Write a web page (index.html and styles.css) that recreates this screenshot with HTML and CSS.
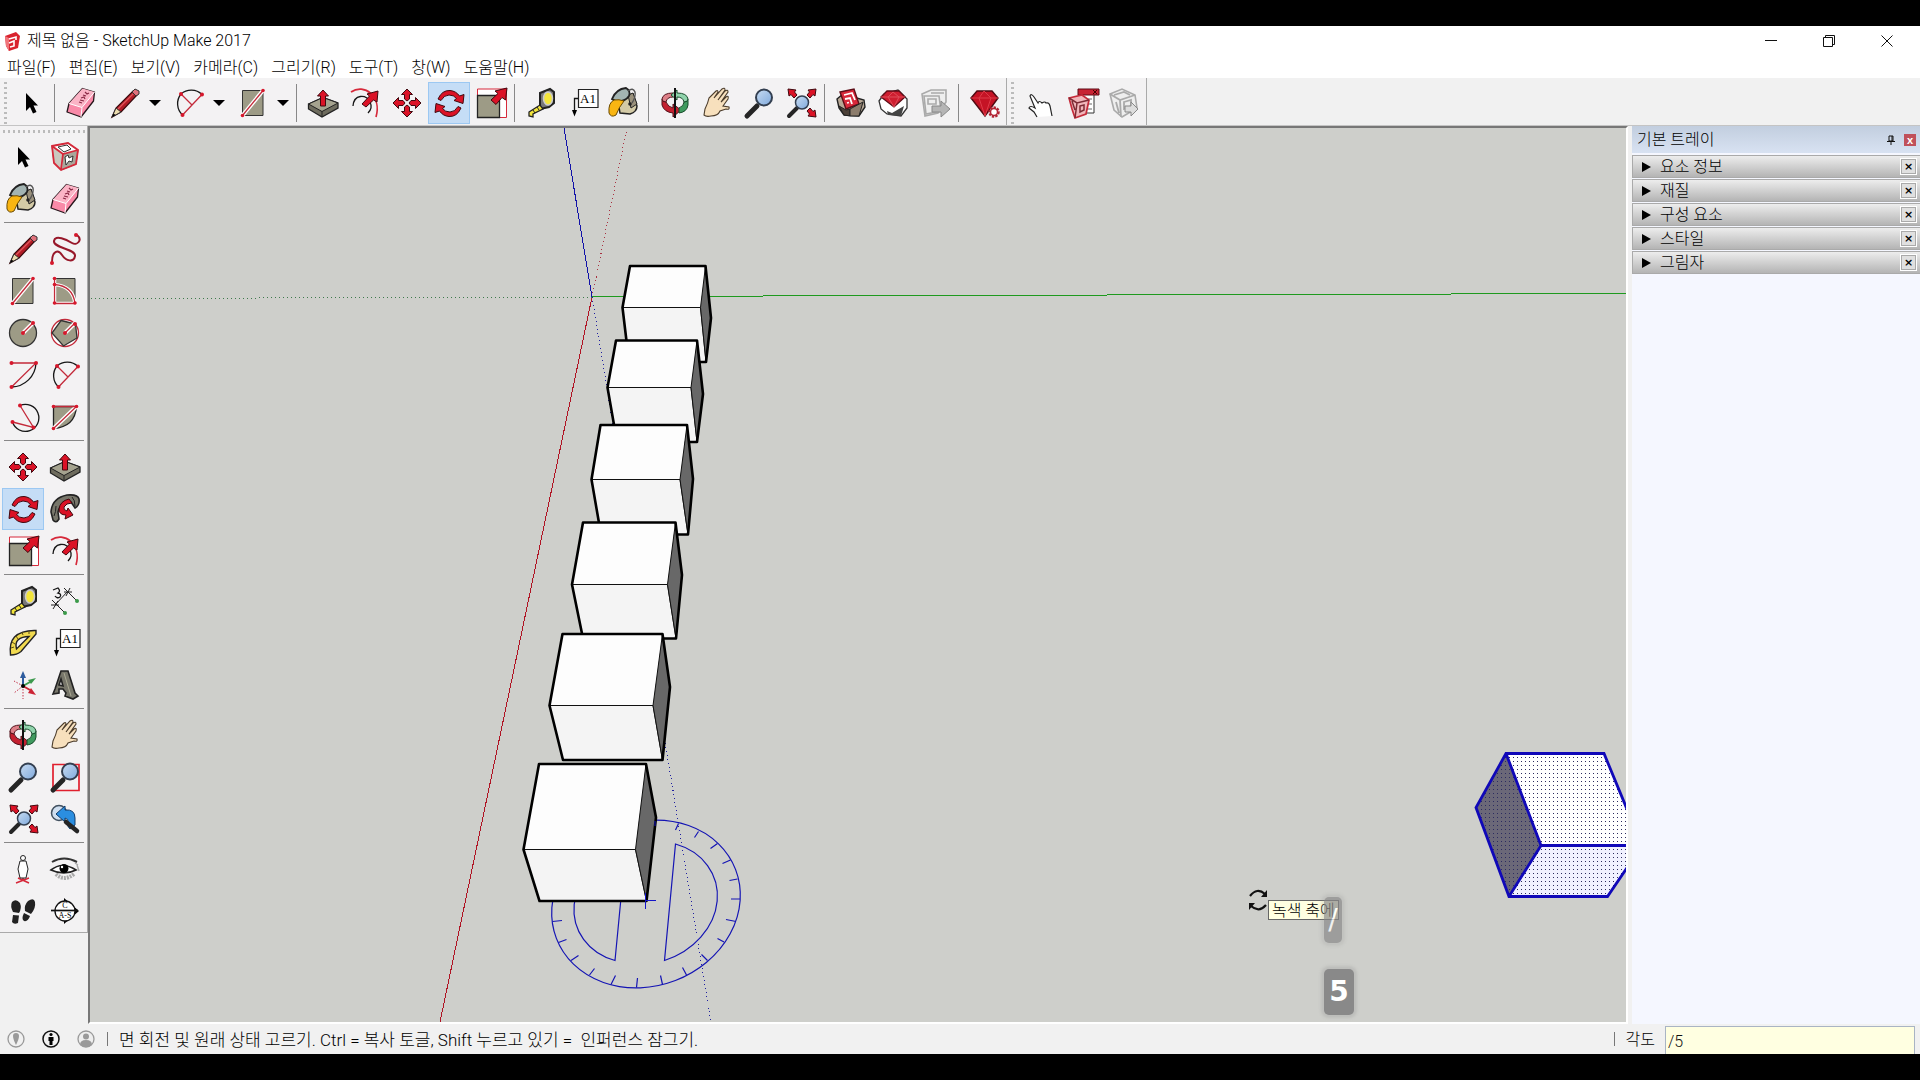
FILE: index.html
```html
<!DOCTYPE html>
<html lang="ko">
<head>
<meta charset="utf-8">
<title>제목 없음 - SketchUp Make 2017</title>
<link rel="stylesheet" href="styles.css">
</head>
<body>
<svg class="sprite" width="0" height="0" aria-hidden="true">
  <defs>
    <linearGradient id="lens" x1="0" y1="0" x2="1" y2="1"><stop offset="0" stop-color="#c8dcf2"/><stop offset="1" stop-color="#7fa9dc"/></linearGradient>
    <pattern id="dots" width="4" height="4" patternUnits="userSpaceOnUse"><rect x="1" y="1" width="1" height="1" fill="#2c2c60"/></pattern>
  </defs>
  <symbol id="i-select" viewBox="0 0 42 42"><path d="M16 11V29L20 25L23 31.500L26.500 30L23.500 23.500H28Z"/></symbol>
  <symbol id="i-component" viewBox="0 0 42 42">
    <path d="M8 10L24 7L34 14L32 28L17 34L10 27Z" fill="#fff" stroke="#555"/>
    <path d="M19 18L34 14L32 28L18 34Z" fill="#a9a79b"/>
    <path d="M8 10L19 18L17 34L10 27Z" fill="#c9c8bf"/>
    <path d="M14 11L23 9L27 13L20 16ZM21 21l3-2 1 3 4-2-1 6-3-1-3 4z" fill="#fff" stroke="#333"/>
    <path d="M8 10L24 7L34 14L32 28L17 34L10 27ZM8 10L19 18L34 14M19 18L17 34" fill="none" stroke="#d6293a" stroke-width="1.800"/>
  </symbol>
  <symbol id="i-paint" viewBox="0 0 42 42">
    <path d="M14 19L29 12L33 24Q33 30 26 32L16 31Z" fill="#d3caa6" stroke="#222" stroke-width="1.500"/>
    <path d="M24 13L29 11L33 22L27 26Z" fill="#9a917c" stroke="#222"/>
    <path d="M8 17Q12 7 22 6Q27 9 25 14Q21 20 12 19Z" fill="#a3b4b2" stroke="#222" stroke-width="1.800"/>
    <path d="M24 9Q29 5 31 10Q32 15 28 21" fill="none" stroke="#555" stroke-width="1.400"/>
    <circle cx="26" cy="22" r="1.800" fill="#222"/>
    <path d="M5 31Q4 21 10 18Q15 17 20 19Q15 25 12 33Q7 36 5 31Z" fill="#f9b512" stroke="#6b4a00"/>
  </symbol>
  <symbol id="i-eraser" viewBox="0 0 42 42">
    <path d="M22.500 6.500L34.500 10L33.500 19L21 35L7 30L9 21.500Z" fill="#f98aa8" stroke="#26161b" stroke-width="1.300" stroke-linejoin="round"/>
    <path d="M9 21.500L22.500 6.500L34.500 10L22 25.500Z" fill="#fbb4c6"/><path d="M9 21.500L22 25.500L21 35M22 25.500L34.500 10" fill="none" stroke="#fff"/>
    <path d="M19 20l3 1M20 18l4 1M21 16l3-1 1 2M23 13l3 1M25 10l2 2 2-1" fill="none" stroke="#8a2844" stroke-width="1.200"/>
  </symbol>
  <symbol id="i-pencil" viewBox="0 0 42 42">
    <path d="M8 35L12 26L29 9L33 13L17 30Z" fill="#b11c26" stroke="#3a0a0d" stroke-width="1.200"/>
    <path d="M14 27L30 11" stroke="#e0555a" stroke-width="1.300"/>
    <path d="M8 35L12 26L17 30Z" fill="#ecdcae" stroke="#333"/><path d="M8 35l1.500-3.500 2 1.500z"/>
    <path d="M28 10L31 7L35 9L35 12L32 14Z" fill="#e0717c" stroke="#333"/>
  </symbol>
  <symbol id="i-freehand" viewBox="0 0 42 42"><path d="M8 34C8 23 14 21 18 27S30 35 31 28S9 20 10 13S23 12 28 15S39 12 33 7" fill="none" stroke="#98182a" stroke-width="2"/><g class="pt"><circle cx="8" cy="35" r="2"/><circle cx="32" cy="7" r="2"/></g></symbol>
  <symbol id="i-rect" viewBox="0 0 42 42"><path d="M10.500 8.500H31V33.500H10.500Z" fill="#9d9b86" stroke="#333"/><path d="M10.500 33.500L31 8.500" stroke="#fff" stroke-width="4"/><path d="M10.500 33.500L31 8.500" class="rl"/><g class="pt"><circle cx="10.500" cy="33.500" r="1.800"/><circle cx="31" cy="8.500" r="1.800"/></g></symbol>
  <symbol id="i-rotrect" viewBox="0 0 42 42"><path d="M10.500 8.500H31V33.500H10.500Z" fill="#9d9b86" stroke="#333"/><path d="M10.500 8.500V33.500H31Q29 16 10.500 14.500" fill="none" stroke="#fff" stroke-width="3.500"/><path d="M10.500 8.500V33.500H31Q29 16 10.500 14.500" class="rl"/><g class="pt"><circle cx="10.500" cy="8.500" r="1.800"/><circle cx="10.500" cy="14.500" r="1.800"/><circle cx="10.500" cy="33" r="1.800"/><circle cx="31" cy="33" r="1.800"/></g></symbol>
  <symbol id="i-circle" viewBox="0 0 42 42"><circle cx="21" cy="21" r="13.500" fill="#9d9b86" stroke="#333" stroke-width="1.300"/><path d="M21 21L31 11" stroke="#fff" stroke-width="4"/><path d="M21 21L31 11" class="rl"/><g class="pt"><circle cx="21" cy="21" r="2"/><circle cx="31" cy="11" r="2"/></g></symbol>
  <symbol id="i-polygon" viewBox="0 0 42 42"><circle cx="21" cy="21" r="13.500" class="rl"/><path d="M17 8.500L31.500 12L33 26L19.500 34L8 21Z" fill="#9d9b86" stroke="#333" stroke-width="1.300"/><path d="M21 21L31 11" stroke="#fff" stroke-width="4"/><path d="M21 21L31 11" class="rl"/><g class="pt"><circle cx="21" cy="21" r="2"/><circle cx="31" cy="12" r="2"/></g></symbol>
  <symbol id="i-arc" viewBox="0 0 42 42"><path d="M34 9A25 25 0 0 1 9.500 33" class="bl"/><path d="M9.500 33L34 9H9.500" class="rl"/><g class="pt"><circle cx="9.500" cy="9" r="2"/><circle cx="34" cy="9" r="2"/><circle cx="9.500" cy="33" r="2"/></g></symbol>
  <symbol id="i-arc2" viewBox="0 0 42 42"><path d="M34 12.500A15.500 15.500 0 0 0 13 12A15.500 15.500 0 0 0 14.500 33" class="bl"/><path d="M14.500 33L34 12.500M13 12L24 23" class="rl"/><g class="pt"><circle cx="13" cy="12" r="2"/><circle cx="34" cy="12.500" r="2"/><circle cx="14.500" cy="33" r="2"/></g></symbol>
  <symbol id="i-arc3" viewBox="0 0 42 42"><path d="M18 9.500A13.500 13.500 0 1 1 10.500 26" class="bl"/><path d="M18 9.500L31.500 31.500L10.500 26" class="rl"/><g class="pt"><circle cx="18" cy="9.500" r="2"/><circle cx="10.500" cy="26" r="2"/><circle cx="31.500" cy="31.500" r="2"/></g></symbol>
  <symbol id="i-pie" viewBox="0 0 42 42"><path d="M9.500 10.500H32.500Q31 31 9.500 32.500Z" fill="#9d9b86" stroke="#222" stroke-width="1.300"/><path d="M9.500 32.500L32.500 10.500" stroke="#fff" stroke-width="4"/><path d="M9.500 32.500L32.500 10.500H9.500" class="rl"/><g class="pt"><circle cx="9.500" cy="10.500" r="1.800"/><circle cx="32.500" cy="10.500" r="1.800"/><circle cx="9.500" cy="32.500" r="1.800"/></g></symbol>
  <symbol id="i-move" viewBox="0 0 42 42"><g class="ra"><path id="mv" d="M21 7L26.500 12.500H23.500V17L21 19L18.500 17V12.500H15.500Z"/><use href="#mv" transform="rotate(90 21 21)"/><use href="#mv" transform="rotate(180 21 21)"/><use href="#mv" transform="rotate(270 21 21)"/></g></symbol>
  <symbol id="i-push" viewBox="0 0 42 42"><path d="M6.500 22L21 15.500L36 21V26L20 35L6.500 27Z" fill="#6e6c5e" stroke="#222" stroke-width="1.300"/><path d="M6.500 22L21 15.500L36 21L20 29.500Z" fill="#a5a38f" stroke="#222"/><path d="M20 29.500V35" stroke="#222"/><path d="M21 8L26.500 14H23.500V24H18.500V14H15.500Z" class="ra"/></symbol>
  <symbol id="i-rotate" viewBox="0 0 42 42"><g class="ra"><path id="rt" d="M10 17Q14 8 22 8.500Q28 9 31.500 14L36 12.500L35 21.500L26 18.500L28.500 16.500Q26 13 21 13Q16 13 13 18.500Z"/><use href="#rt" transform="rotate(180 21.500 21.500)"/></g></symbol>
  <symbol id="i-follow" viewBox="0 0 42 42"><path d="M7 24Q8 10 23 7Q34 6 35 11Q36 17 31 20L27 14Q16 15 14 24L15 31Q12 36 9 32Z" fill="#77766a" stroke="#222" stroke-width="1.600"/><path d="M10 28Q12 24 12 18M28 9Q31 12 31 18" stroke="#222" fill="none"/><path d="M25 11Q16 13 15 21Q15 27 22 27L21 31L29 27L24 20L23 23Q19 22 20 19Q22 15 28 15Z" class="ra"/></symbol>
  <symbol id="i-scale" viewBox="0 0 42 42"><path d="M7.500 7H36.500V35.500H7.500Z" fill="#fff" stroke="#d6293a"/><path d="M7.500 13.500H29.500V35.500H7.500Z" fill="#9d9b86" stroke="#222" stroke-width="1.300"/><path d="M37 6L35.500 18L32 15.500L26 22.500L21 18L28 11.500L25 9Z" class="ra"/></symbol>
  <symbol id="i-offset" viewBox="0 0 42 42"><path d="M7 10C20 1 38 14 32 35" fill="none" stroke="#d6293a" stroke-width="1.700"/><path d="M9 24C10 12 22 12 26 20Q29 26 24 31" class="bl"/><path d="M34 9L33 20L29.500 18L22 25L18 22L25.500 14L23 12Z" class="ra"/></symbol>
  <symbol id="i-tape" viewBox="0 0 42 42"><path d="M20 11L30 7L34 10V21L29 25L20 27Z" fill="#777" stroke="#222" stroke-width="2"/><ellipse cx="28" cy="16.500" rx="4.500" ry="6.500" fill="#f3e53a" stroke="#ccc" stroke-width="1.500"/><path d="M9 30L20 23L23 27L13 32V35L9 34Z" fill="#f3e53a" stroke="#222" stroke-width="1.300"/><path d="M13 28l2 3M17 25l2 3" stroke="#222"/></symbol>
  <symbol id="i-dim" viewBox="0 0 42 42"><path d="M11 25L24 11M8 20l13 13M20 8l13 13M7 25h8M9 29l5-8M20 12h8M22 16l4-8" stroke="#222" fill="none"/><path d="M9 10l5-2q3 3 0 5q4 1 2 4q-3 2-5-1" class="bl"/><circle cx="33" cy="21" r="2" fill="#3a9a49"/><circle cx="21" cy="33" r="2" fill="#3a9a49"/></symbol>
  <symbol id="i-protractor" viewBox="0 0 42 42"><path d="M34 8.500Q20 8 12.500 15Q7 21 8.500 33Q15 33 19 29.500L34 12ZM27 14.500L14.500 27Q13 21 16 18Q20 14.500 27 14.500Z" fill="#f1da50" fill-rule="evenodd" stroke="#222" stroke-width="1.400"/><path d="M9 26l3-1M10 20l3 2M14 14l2 3M20 10l1 3M27 9v3" stroke="#5d4f10" fill="none"/></symbol>
  <symbol id="i-axes" viewBox="0 0 42 42"><path d="M21 22L12 17M21 22L12 29M21 22V35" stroke-dasharray="1.500 1.500" stroke="#c2344a" fill="none"/><path d="M21 22V14" stroke="#2d5c9e" stroke-width="2"/><path d="M21 7l3 7h-6z" fill="#2d5c9e"/><path d="M21 22L28 18" stroke="#3c9a4d" stroke-width="2"/><path d="M34 14l-5 6-3-4z" fill="#3c9a4d"/><path d="M21 22L28 26" stroke="#cc2435" stroke-width="2"/><path d="M34 31l-8-2 3-5z" fill="#cc2435"/><circle cx="21" cy="22" r="2"/></symbol>
  <symbol id="i-3dtext" viewBox="0 0 42 42"><path d="M17 7L24 7L31 29L34 32L29 35L21 32L22 29L19 25L15 25V29L9 30L11 25Z M17 15L15 21L19 22Z" fill="#77766a" fill-rule="evenodd" stroke="#222" stroke-width="1.600"/><path d="M20 9L27 32" stroke="#aaa993"/></symbol>
  <symbol id="i-orbit" viewBox="0 0 42 42">
    <path d="M8 17V23Q10 30 19 31V35L27 28L19 22V26Q14 25 12 20Z" fill="#c4202f" stroke="#501018"/>
    <path d="M8 17Q9 11 19 11V15Q13 15 12 20Q8 20 8 17Z" fill="#dd8088" stroke="#501018"/>
    <path d="M34 17V23Q33 30 25 31V26Q30 24 30 20Z" fill="#3f9a5e" stroke="#174b2a"/>
    <path d="M34 17Q33 11 23 11V8L17 13L23 18V15Q29 15 30 20Q34 20 34 17Z" fill="#8fd3ab" stroke="#174b2a"/>
    <path d="M21 6V36" stroke="#111" stroke-width="2"/></symbol>
  <symbol id="i-pan" viewBox="0 0 42 42"><path d="M9 27Q12 21 13 16L20 9Q22 8 22 10L18 16L26 7Q29 5 29 8L22 18L29 9Q32 7 32 10L25 20L30 15Q33 13 32 17L27 24L33 25Q34 28 30 27L24 29Q22 34 15 34Q10 35 8 33Z" fill="#f7e0bd" stroke="#4b3c2b" stroke-width="1.100"/></symbol>
  <symbol id="i-zoom" viewBox="0 0 42 42"><path d="M9 34L19 24" stroke="#252525" stroke-width="5" stroke-linecap="round"/><circle cx="26" cy="15.500" r="8" fill="url(#lens)" stroke="#333f50" stroke-width="2"/></symbol>
  <symbol id="i-zoomwin" viewBox="0 0 42 42"><path d="M9 8.500H35V34.500H9Z" fill="none" stroke="#e0202e" stroke-width="1.700"/><use href="#i-zoom" width="42" height="42"/></symbol>
  <symbol id="i-extents" viewBox="0 0 42 42"><path d="M9 34L17 26" stroke="#252525" stroke-width="4" stroke-linecap="round"/><circle cx="22" cy="20.500" r="6.500" fill="url(#lens)" stroke="#333f50" stroke-width="1.500"/><g class="ra"><path d="M8 7L16 8L14.500 10L17 13L14 16L11 12.500L9 14Z"/><path d="M36 7L28 8L29.500 10L27 13L30 16L33 12.500L35 14Z"/><path d="M36 35L28 34L29.500 32L27 29L30 26L33 29.500L35 28Z"/></g></symbol>
  <symbol id="i-prev" viewBox="0 0 42 42"><circle cx="15" cy="15" r="7.500" fill="#cfdff0" stroke="#41505f" stroke-width="1.500"/><path d="M12 16L21 8V12Q31 11 31 20V27L26 31Q23 29 24 24Q25 21 21 20V24Z" fill="#2b8ee0" stroke="#123d6b"/><path d="M22 24L33 33" stroke="#252525" stroke-width="4.500" stroke-linecap="round"/></symbol>
  <symbol id="i-position" viewBox="0 0 42 42"><path d="M16 30L27 35M27 30L14 35M21 27v5" stroke="#d6293a" stroke-width="1.500"/><path d="M18 13L24 13L26 21L24 30H18L16 21Z" fill="#fff" stroke="#222"/><circle cx="21" cy="10" r="2.500" fill="#fff" stroke="#222"/></symbol>
  <symbol id="i-look" viewBox="0 0 42 42"><path d="M8 14Q20 7 33 14" fill="none" stroke="#333" stroke-width="2"/><path d="M12 26Q20 34 30 26" stroke="#aaa" stroke-width="4" stroke-dasharray="2 1" fill="none"/><path d="M7 22Q18 13 32 22Q20 28 7 22Z" fill="#fff" stroke="#222" stroke-width="1.700"/><circle cx="20" cy="20.500" r="4.500"/><circle cx="18" cy="19" r="1.200" fill="#fff"/><path d="M33 17L35 23M31 15L34 17" stroke="#aaa" stroke-width="1.500"/></symbol>
  <symbol id="i-walk" viewBox="0 0 42 42"><path d="M10 12Q14 8 18 13Q20 18 17 23L11 22Q8 16 10 12ZM11 25L17 25.500L16 33Q12 35 10 32ZM26 11Q32 7 33 12Q34 18 29 24L23 21Q22 15 26 11ZM22 23L28 26Q26 32 22 31Q19 29 22 23Z" fill="#222"/></symbol>
  <symbol id="i-warehouse" viewBox="0 0 42 42"><path d="M7 17L13 12L34 18L35 25L29 34L14 33L9 26Z" fill="#b7a795" stroke="#222" stroke-width="1.400"/><path d="M10 10L24 7L29 22L16 27Z" fill="#d9283a" stroke="#5d0d17" stroke-width="1.400"/><path d="M14 13L22 11L25 18M15 17L20 16L22 22M17 21L19 20.500" fill="none" stroke="#fff" stroke-width="1.800"/><path d="M9 24L16 28L20 27L20 34L14 33Z" fill="#4c4038" stroke="#222"/><path d="M20 27L33 20L29 34H20Z" fill="#8c7c6c" stroke="#222"/></symbol>
  <symbol id="i-extwh" viewBox="0 0 42 42"><path d="M7 19L12 12L26 8L35 17V26L29 34L15 32L9 27Z" fill="#fff" stroke="#333" stroke-width="1.300"/><path d="M15 29L20 31L32 24L29 34L16 33Z" fill="#444"/><path d="M9 15L15 9L27 9L33 15L22 25Z" fill="#cf1e30" stroke="#5d0d17" stroke-width="1.300"/><path d="M9 15H33M16 15L22 25L27 15L21 10L16 15" stroke="#e04c58" fill="none"/></symbol>
  <symbol id="i-share" viewBox="0 0 42 42"><path d="M8 12L17 8L32 8V20L24 31L11 34Z" fill="#eee" stroke="#aaa" stroke-width="1.600"/><path d="M10 14H25L27 29L12 32ZM17 11H30M14 17H22V22H14Z" stroke="#aaa" fill="none" stroke-width="1.600"/><path d="M18 24H27V19L36 27L27 35V30H18Z" fill="#b5b5b5" stroke="#888"/></symbol>
  <symbol id="i-extmgr" viewBox="0 0 42 42"><path d="M7 16L13 9H28L34 16L21 34Z" fill="#c51325" stroke="#4f0a12" stroke-width="1.400"/><path d="M7 16H34M15 16L21 34L27 16L20 9L15 16" stroke="#de3a48" fill="none"/><circle cx="30" cy="30" r="4" fill="#f3f3f3" stroke="#b22434" stroke-width="3.500" stroke-dasharray="2 1"/><circle cx="30" cy="30" r="3.500" fill="#fff" stroke="#b22434" stroke-width="1.500"/></symbol>
  <symbol id="i-interact" viewBox="0 0 42 42"><path d="M17 35L14 30L9 26Q10 23 15 26L10 14Q11 11 14 15L18 21Q19 18 22 21Q25 19 26 21Q29 20 30 24L32 34" fill="#fff" stroke="#222" stroke-width="1.200"/></symbol>
  <symbol id="i-options" viewBox="0 0 42 42"><path d="M17 11H32V31H22Z" fill="#fff" stroke="#333"/><path d="M25 17h5M25 22h5M25 27h5" stroke="#666"/><path d="M16 7H37V13H16Z" fill="#c82333" stroke="#5d0d17"/><path d="M31 8l4 4M35 8l-4 4" stroke="#400"/><path d="M7 16L20 13L27 18L24 32L13 36L10 27Z" fill="#f1b6ba" stroke="#c52b3a" stroke-width="1.700"/><path d="M7 16L15 21L27 18M15 21L13 36M10 19L13 28M18 24l4-1v5l-4 2z" fill="none" stroke="#7d2c35" stroke-width="1.500"/></symbol>
  <symbol id="i-attrs" viewBox="0 0 42 42"><path d="M6 12L18 7L31 13L33 26L18 35L10 28Z" fill="#eee" stroke="#aaa" stroke-width="1.600"/><path d="M6 12L16 18L31 13M16 18L17 35M10 13L20 10L26 13M20 20L27 18V24L20 27ZM12 20L15 31" stroke="#aaa" fill="none" stroke-width="1.800"/><path d="M21 24H27V20L34 27L27 34V30H21Z" fill="#ddd" stroke="#888"/></symbol>
</svg>

<div class="app">
  <header class="titlebar">
    <svg class="logo" viewBox="0 0 16 20" aria-hidden="true"><path d="M1 5L12 1L16 5L14 17L5 20L2 15Z" fill="#d9232e"/><path d="M1 5L5 7L5 20L2 15Z" fill="#f0757b"/><path d="M5 8L12 6V9M5 12L10 10V15L6 16" stroke="#fff" stroke-width="1.600" fill="none"/></svg>
    <h1>제목 없음 - SketchUp Make 2017</h1>
    <div class="window-buttons">
      <button aria-label="최소화"><svg viewBox="0 0 12 12"><path d="M0 5.500H12"/></svg></button>
      <button aria-label="이전 크기로"><svg viewBox="0 0 12 12"><path d="M.5 2.500H9.500V11.500H.5ZM2.500 2V.5H11.500V9.500H10"/></svg></button>
      <button aria-label="닫기"><svg viewBox="0 0 12 12"><path d="M.5 .5L11.500 11.500M11.500 .5L.5 11.500"/></svg></button>
    </div>
  </header>
  <nav class="menubar">
    <button>파일(F)</button><button>편집(E)</button><button>보기(V)</button><button>카메라(C)</button><button>그리기(R)</button><button>도구(T)</button><button>창(W)</button><button>도움말(H)</button>
  </nav>
  <div class="toolrow">
    <div class="toolbar">
      <span class="grip"></span>
      <button class="tool" aria-label="선택"><svg><use href="#i-select"/></svg></button>
      <span class="sep"></span>
      <button class="tool" aria-label="지우개"><svg><use href="#i-eraser"/></svg></button>
      <button class="tool split" aria-label="선"><svg><use href="#i-pencil"/></svg><i class="caret"></i></button>
      <button class="tool split" aria-label="호"><svg><use href="#i-arc2"/></svg><i class="caret"></i></button>
      <button class="tool split" aria-label="직사각형"><svg><use href="#i-rect"/></svg><i class="caret"></i></button>
      <span class="sep"></span>
      <button class="tool" aria-label="밀기/끌기"><svg><use href="#i-push"/></svg></button>
      <button class="tool" aria-label="오프셋"><svg><use href="#i-offset"/></svg></button>
      <button class="tool" aria-label="이동"><svg><use href="#i-move"/></svg></button>
      <button class="tool active" aria-label="회전"><svg><use href="#i-rotate"/></svg></button>
      <button class="tool" aria-label="배율"><svg><use href="#i-scale"/></svg></button>
      <span class="sep"></span>
      <button class="tool" aria-label="줄자"><svg><use href="#i-tape"/></svg></button>
      <button class="tool" aria-label="텍스트"><svg viewBox="0 0 42 42"><path d="M16.500 7.500H36V25.500H16.500Z" fill="#fff" stroke="#222" stroke-width="1.200"/><path d="M16 16.500H12.500V29" class="bl"/><path d="M10 28h5l-2.500 6.500z"/><text x="26" y="21" class="a1">A1</text></svg></button>
      <button class="tool" aria-label="페인트통"><svg><use href="#i-paint"/></svg></button>
      <span class="sep"></span>
      <button class="tool" aria-label="궤도"><svg><use href="#i-orbit"/></svg></button>
      <button class="tool" aria-label="팬"><svg><use href="#i-pan"/></svg></button>
      <button class="tool" aria-label="확대/축소"><svg><use href="#i-zoom"/></svg></button>
      <button class="tool" aria-label="범위 확대"><svg><use href="#i-extents"/></svg></button>
      <span class="sep"></span>
      <button class="tool" aria-label="3D Warehouse"><svg><use href="#i-warehouse"/></svg></button>
      <button class="tool" aria-label="Extension Warehouse"><svg><use href="#i-extwh"/></svg></button>
      <button class="tool" aria-label="공유"><svg><use href="#i-share"/></svg></button>
      <span class="sep"></span>
      <button class="tool" aria-label="확장 관리자"><svg><use href="#i-extmgr"/></svg></button>
    </div>
    <div class="toolbar">
      <span class="grip"></span>
      <button class="tool" aria-label="상호 작용"><svg><use href="#i-interact"/></svg></button>
      <button class="tool" aria-label="구성 요소 옵션"><svg><use href="#i-options"/></svg></button>
      <button class="tool" aria-label="구성 요소 속성"><svg><use href="#i-attrs"/></svg></button>
    </div>
  </div>

  <main class="workspace">
    <aside class="palette-column">
      <div class="palette">
        <span class="grip-h"></span>
        <div class="group">
          <button class="tool" aria-label="선택"><svg><use href="#i-select"/></svg></button><button class="tool" aria-label="구성 요소 만들기"><svg><use href="#i-component"/></svg></button>
          <button class="tool" aria-label="페인트통"><svg><use href="#i-paint"/></svg></button><button class="tool" aria-label="지우개"><svg><use href="#i-eraser"/></svg></button>
        </div>
        <div class="group">
          <button class="tool" aria-label="선"><svg><use href="#i-pencil"/></svg></button><button class="tool" aria-label="자유곡선"><svg><use href="#i-freehand"/></svg></button>
          <button class="tool" aria-label="직사각형"><svg><use href="#i-rect"/></svg></button><button class="tool" aria-label="회전된 직사각형"><svg><use href="#i-rotrect"/></svg></button>
          <button class="tool" aria-label="원"><svg><use href="#i-circle"/></svg></button><button class="tool" aria-label="다각형"><svg><use href="#i-polygon"/></svg></button>
          <button class="tool" aria-label="호"><svg><use href="#i-arc"/></svg></button><button class="tool" aria-label="2점 호"><svg><use href="#i-arc2"/></svg></button>
          <button class="tool" aria-label="3점 호"><svg><use href="#i-arc3"/></svg></button><button class="tool" aria-label="파이"><svg><use href="#i-pie"/></svg></button>
        </div>
        <div class="group">
          <button class="tool" aria-label="이동"><svg><use href="#i-move"/></svg></button><button class="tool" aria-label="밀기/끌기"><svg><use href="#i-push"/></svg></button>
          <button class="tool active" aria-label="회전"><svg><use href="#i-rotate"/></svg></button><button class="tool" aria-label="따라가기"><svg><use href="#i-follow"/></svg></button>
          <button class="tool" aria-label="배율"><svg><use href="#i-scale"/></svg></button><button class="tool" aria-label="오프셋"><svg><use href="#i-offset"/></svg></button>
        </div>
        <div class="group">
          <button class="tool" aria-label="줄자"><svg><use href="#i-tape"/></svg></button><button class="tool" aria-label="치수"><svg><use href="#i-dim"/></svg></button>
          <button class="tool" aria-label="각도기"><svg><use href="#i-protractor"/></svg></button><button class="tool" aria-label="텍스트"><svg viewBox="0 0 42 42"><path d="M16.500 7.500H36V25.500H16.500Z" fill="#fff" stroke="#222" stroke-width="1.200"/><path d="M16 16.500H12.500V29" class="bl"/><path d="M10 28h5l-2.500 6.500z"/><text x="26" y="21" class="a1">A1</text></svg></button>
          <button class="tool" aria-label="축"><svg><use href="#i-axes"/></svg></button><button class="tool" aria-label="3D 텍스트"><svg><use href="#i-3dtext"/></svg></button>
        </div>
        <div class="group">
          <button class="tool" aria-label="궤도"><svg><use href="#i-orbit"/></svg></button><button class="tool" aria-label="팬"><svg><use href="#i-pan"/></svg></button>
          <button class="tool" aria-label="확대/축소"><svg><use href="#i-zoom"/></svg></button><button class="tool" aria-label="확대/축소 창"><svg><use href="#i-zoomwin"/></svg></button>
          <button class="tool" aria-label="범위 확대"><svg><use href="#i-extents"/></svg></button><button class="tool" aria-label="이전"><svg><use href="#i-prev"/></svg></button>
        </div>
        <div class="group">
          <button class="tool" aria-label="카메라 배치"><svg><use href="#i-position"/></svg></button><button class="tool" aria-label="둘러보기"><svg><use href="#i-look"/></svg></button>
          <button class="tool" aria-label="이동 보기"><svg><use href="#i-walk"/></svg></button><button class="tool" aria-label="단면"><svg viewBox="0 0 42 42"><path d="M20 8L35 21L20 34Z"/><circle cx="21" cy="21" r="10" fill="#fff" stroke="#111" stroke-width="1.300"/><path d="M7 20.500H34" stroke="#111" stroke-width="1.700"/><text x="21" y="18" class="tiny">C</text><text x="21" y="28" class="tiny">A-S</text></svg></button>
        </div>
      </div>
    </aside>

    <section class="viewport">
      <svg class="scene" viewBox="90 128 1536 894" preserveAspectRatio="xMinYMin slice">
        <g fill="none" shape-rendering="crispEdges">
          <path d="M592 297L564 128" stroke="#1212a8"/>
          <path d="M592 297L627 128" stroke="#a83040" stroke-dasharray="1 3"/>
          <path d="M592 297L440 1022" stroke="#b01424"/>
          <path d="M592 296.500L1626 293.500" stroke="#1e9a1e"/>
          <path d="M592 297L90 298.500" stroke="#3f7a4c" stroke-dasharray="1 3"/>
          <path d="M592 297L711 1022" stroke="#1f1fa0" stroke-dasharray="1 3"/>
        </g>
        <g fill="none" stroke="#1414b4" stroke-width="1.200">
          <ellipse cx="646" cy="904" rx="96" ry="82" transform="rotate(-21 646 904)"/>
          <path d="M740 899H731M736 921.500L726 919.500M724 942L717.500 938.500M707.500 960.500L701.500 954.500M686.500 975L682.500 967.500M662.500 984.500L660.500 975.500M636.500 987.500L637.500 978M611 984.500L615.500 975.500M589.500 975L594.500 968.500M571 960.500L578.500 955.500M558.500 942.500L566.500 939.500M552.500 921.500L562 920.500M737.500 879L729.500 880.500M730.500 860L722.500 863.500M717.500 843.500L710.500 848.500M698.500 831.500L694.500 837.500M678.500 823.500L675.500 830"/>
          <path d="M675.500 844L664.500 960.500A71 60 -21 0 0 675.500 844Z"/>
          <path d="M626 846L615 960.500A70 59 -21 0 1 626 846Z"/>
        </g>
        <g class="cube">
          <path class="top" d="M630 266H705.500L700.500 307.500H622.500Z"/><path class="front" d="M622.500 307.500H700.500L706 362H629Z"/><path class="side" d="M705.500 266L711 318L706 362L700.500 307.500Z"/><path class="rim" d="M630 266H705.500L711 318L706 362H629L622.500 307.500Z"/>
          <path class="top" d="M616 340.500H697L691 387.500H607.500Z"/><path class="front" d="M607.500 387.500H691L697 442H617Z"/><path class="side" d="M697 340.500L703 394L697 442L691 387.500Z"/><path class="rim" d="M616 340.500H697L703 394L697 442H617L607.500 387.500Z"/>
          <path class="top" d="M600.500 425H687L680 479.500H591.500Z"/><path class="front" d="M591.500 479.500H680L688 534.500H601Z"/><path class="side" d="M687 425L693 479L688 534.500L680 479.500Z"/><path class="rim" d="M600.500 425H687L693 479L688 534.500H601L591.500 479.500Z"/>
          <path class="top" d="M583 522.500H675.500L667.500 584.500H572Z"/><path class="front" d="M572 584.500H667.500L676 638.500H583Z"/><path class="side" d="M675.500 522.500L682 575L676 638.500L667.500 584.500Z"/><path class="rim" d="M583 522.500H675.500L682 575L676 638.500H583L572 584.500Z"/>
          <path class="top" d="M562.500 634H662.500L653 705.500H549.500Z"/><path class="front" d="M549.500 705.500H653L662.500 760H563Z"/><path class="side" d="M662.500 634L670 687L662.500 760L653 705.500Z"/><path class="rim" d="M562.500 634H662.500L670 687L662.500 760H563L549.500 705.500Z"/>
          <path class="top" d="M539 764H646L635.500 849.500H523.500Z"/><path class="front" d="M523.500 849.500H635.500L646.500 901H539.500Z"/><path class="side" d="M646 764L656 817.500L646.500 901L635.500 849.500Z"/><path class="rim" d="M539 764H646L656 817.500L646.500 901H539.500L523.500 849.500Z"/>
        </g>
        <path d="M655 821V826M645.500 893V909M645 900.500H656" stroke="#1414c8" fill="none"/>
        <g class="selected">
          <path fill="#fff" d="M1506 753.500H1604L1642 845.500H1541Z"/><path fill="#f1f1ff" d="M1541 845.500H1642L1607.500 896.500H1509Z"/><path fill="#6b6878" d="M1506 753.500L1541 845.500L1509 896.500L1476 807.500Z"/>
          <path fill="url(#dots)" d="M1506 753.500H1604L1642 845.500L1607.500 896.500H1509L1476 807.500Z"/>
          <path fill="none" stroke="#1008b8" stroke-width="2.800" d="M1506 753.500H1604L1642 845.500L1607.500 896.500H1509L1476 807.500ZM1506 753.500L1541 845.500H1642M1541 845.500L1509 896.500"/>
        </g>
        <g fill="none" stroke="#111" stroke-width="2.200"><path d="M1250 896Q1257 887 1265 894M1266 905Q1259 913 1251 906"/><path d="M1267 890V897H1261ZM1249 910V903H1255Z" fill="#111" stroke="none"/></g>
      </svg>
      <div class="hint">녹색 축에</div>
      <kbd class="key key-slash">/</kbd>
      <kbd class="key key-five">5</kbd>
    </section>

    <aside class="tray">
      <header class="tray-head"><h2>기본 트레이</h2>
        <button class="pin" aria-label="고정"><svg viewBox="0 0 8 10"><path d="M2 1H6V6H2ZM5 1V6M0 6.500H8M4 6V10" fill="none" stroke="#111"/></svg></button>
        <button class="tray-close" aria-label="닫기">x</button></header>
      <ul class="panels">
        <li><button class="expand">요소 정보</button><button class="dismiss" aria-label="닫기">×</button></li>
        <li><button class="expand">재질</button><button class="dismiss" aria-label="닫기">×</button></li>
        <li><button class="expand">구성 요소</button><button class="dismiss" aria-label="닫기">×</button></li>
        <li><button class="expand">스타일</button><button class="dismiss" aria-label="닫기">×</button></li>
        <li><button class="expand">그림자</button><button class="dismiss" aria-label="닫기">×</button></li>
      </ul>
    </aside>
  </main>

  <footer class="statusbar">
    <svg class="st" viewBox="0 0 18 18"><circle cx="9" cy="9" r="8" fill="none" stroke="#999" stroke-width="1.300"/><path d="M9 3a3 3 0 0 1 3 3q0 3-3 9q-3-6-3-9a3 3 0 0 1 3-3" fill="#999"/></svg>
    <svg class="st" viewBox="0 0 18 18"><circle cx="9" cy="9" r="8" fill="none" stroke="#111" stroke-width="1.500"/><circle cx="9" cy="4.500" r="1.600"/><path d="M6.500 7h5v4h-1v4h-3v-4h-1z"/></svg>
    <svg class="st" viewBox="0 0 18 18"><circle cx="9" cy="9" r="8" fill="#eee" stroke="#999" stroke-width="1.300"/><circle cx="9" cy="6.500" r="3" fill="#999"/><path d="M3 15q0-5 6-5t6 5q-6 4-12 0" fill="#999"/></svg>
    <span class="bar"></span>
    <p>면 회전 및 원래 상태 고르기. Ctrl = 복사 토글, Shift 누르고 있기 = &nbsp;인퍼런스 잠그기.</p>
    <span class="bar"></span>
    <label for="measure">각도</label>
    <input id="measure" type="text" value="/5">
  </footer>
</div>
</body>
</html>
```
FILE: styles.css
```css
* { box-sizing: border-box; }
body { margin: 0; background: #000; color: #000; font: 300 16px/20px Roboto, "Noto Sans CJK KR", sans-serif; }
button { margin: 0; padding: 0; border: 0; background: none; color: inherit; font: inherit; }
h1, h2, p, ul { margin: 0; padding: 0; font-size: 16px; font-weight: inherit; list-style: none; }
.sprite { position: absolute; }

.app { height: 100vh; display: flex; flex-direction: column; border: solid #000; border-width: 26px 0; background: #f1f1f1; overflow: hidden; }

.titlebar { display: flex; align-items: center; height: 30px; padding-left: 4px; background: #fff; }
.logo { width: 16px; height: 20px; margin-right: 7px; }
.window-buttons { display: flex; margin-left: auto; padding-right: 4px; }
.window-buttons button { width: 58px; height: 28px; display: grid; place-items: center; }
.window-buttons svg { width: 12px; height: 12px; fill: none; stroke: #111; }

.menubar { display: flex; gap: 13px; height: 22px; padding: 2px 0 0 7px; background: #fff; }
.toolrow { display: flex; height: 48px; border-bottom: 1px solid #c4c4c4; }
.toolbar { display: flex; align-items: center; padding-top: 3px; border-right: 1px solid #aaa; background: #f3f2f3; }
.grip { width: 3px; height: 42px; margin: 0 3px 0 4px; background: repeating-linear-gradient(#bbb 0 2px, transparent 2px 5px); }
.toolbar + .toolbar .grip { margin-right: 6px; }
.sep { width: 1px; height: 38px; margin: 0 5px 0 2px; background: #888; }
.tool { display: flex; align-items: center; width: 42px; height: 42px; }
.tool svg { width: 42px; height: 42px; flex: none; }
.tool.active { background: #c5ddf6; border: 1px solid #9cc8f2; }
.tool.active svg { margin: -1px; }
.split { width: 64px; padding-left: 2px; }
.caret { margin-left: 3px; border: 6px solid transparent; border-top-color: #000; border-bottom: 0; }

.rl { fill: none; stroke: #c32a3a; stroke-width: 1.3px; }
circle.rl { fill: #fff; }
.bl { fill: none; stroke: #161616; stroke-width: 1.3px; }
.pt { fill: #d6182c; }
.ra { fill: #db1226; stroke: #40080e; stroke-width: 1px; }
.a1 { font: 13px "Liberation Serif", serif; text-anchor: middle; }
.tiny { font: 8px "Liberation Serif", serif; text-anchor: middle; }

.workspace { flex: 1; min-height: 0; display: grid; grid-template-columns: 88px minmax(0, 1fr) 288px; }
.palette { border-right: 1px solid #aaa; border-bottom: 1px solid #aaa; padding: 4px 0 0 2px; background: #f3f2f3; }
.grip-h { display: block; width: 82px; height: 3px; margin: 0 0 3px 1px; background: repeating-linear-gradient(90deg, #bbb 0 2px, transparent 2px 5px); }
.group { display: grid; grid-template-columns: 42px 42px; }
.group + .group::before { content: ""; grid-column: 1 / -1; width: 80px; height: 1px; margin: 2px 0 5px 2px; background: #888; }

.viewport { position: relative; margin-right: 4px; border: 2px solid #777; border-right-color: #fff; border-bottom-color: #fff; background: #cecfcb; overflow: hidden; }
.scene { display: block; width: 100%; height: 100%; }
.top { fill: #fdfdfd; }
.front { fill: #f4f4f4; }
.side { fill: #686868; }
.cube .front, .cube .side { stroke: #111; stroke-width: 1px; }
.rim { fill: none; stroke: #000; stroke-width: 2.6px; stroke-linejoin: round; }
.hint { position: absolute; left: 1178px; top: 772px; padding: 1px 3px 0; border: 1px solid #666; background: #ffffe1; font-size: 16px; line-height: 17px; white-space: nowrap; }
.key { position: absolute; left: 1234px; height: 46px; border-radius: 5px; background: #898989; box-shadow: 0 0 3px 3px rgba(150, 150, 150, .3); color: #fff; font: bold 28px/46px "DejaVu Sans", sans-serif; text-align: center; }
.key-slash { top: 769px; width: 18px; font-weight: 400; opacity: .7; }
.key-five { top: 841px; width: 30px; }

.tray { background: #f5f7ff; }
.tray-head { display: flex; align-items: center; height: 27px; padding: 0 4px 0 5px; background: linear-gradient(#c2cedf, #d8e2f2); }
.tray h2, .expand { font-size: 16px; }
.tray h2 { padding-top: 1px; }
.pin { width: 8px; height: 20px; margin: 0 9px 0 auto; display: grid; place-items: center; }
.pin svg { width: 8px; height: 10px; }
.tray-close { width: 12px; height: 12px; background: #c0505a; color: #fff; font: bold 11px/10px "Liberation Sans", sans-serif; }
.panels { display: grid; gap: 1px; padding-top: 2px; }
.panels li { display: flex; align-items: center; height: 23px; padding: 0 3px 0 9px; border: 1px solid #aaa; border-right: 0; background: linear-gradient(#ededed, #b4b4b4); }
.expand { display: flex; align-items: center; gap: 9px; flex: 1; height: 20px; }
.expand::before { content: ""; border: 5px solid transparent; border-left: 9px solid #000; border-right: 0; }
.dismiss { width: 17px; height: 17px; border: 1px solid #fff; outline: 1px solid #aaa; outline-offset: -2px; background: #e0e0e0; font: bold 11px/14px "DejaVu Sans", sans-serif; }

.statusbar { display: flex; align-items: center; height: 30px; padding: 0 5px 0 7px; }
.st { width: 18px; height: 18px; margin-right: 17px; }
.bar { width: 1px; height: 14px; margin-right: 11px; background: #777; }
.st + .bar { margin-left: -5px; }
.statusbar p { flex: 1; font-size: 17px; white-space: nowrap; }
.statusbar p, .statusbar label { padding-top: 2px; }
.statusbar input { align-self: flex-end; width: 250px; height: 28px; margin-left: 10px; padding: 2px 2px 0; border: 1px solid #a9b4c4; border-bottom: 0; border-radius: 0; background: #ffffe1; color: #111; font: inherit; }
```
